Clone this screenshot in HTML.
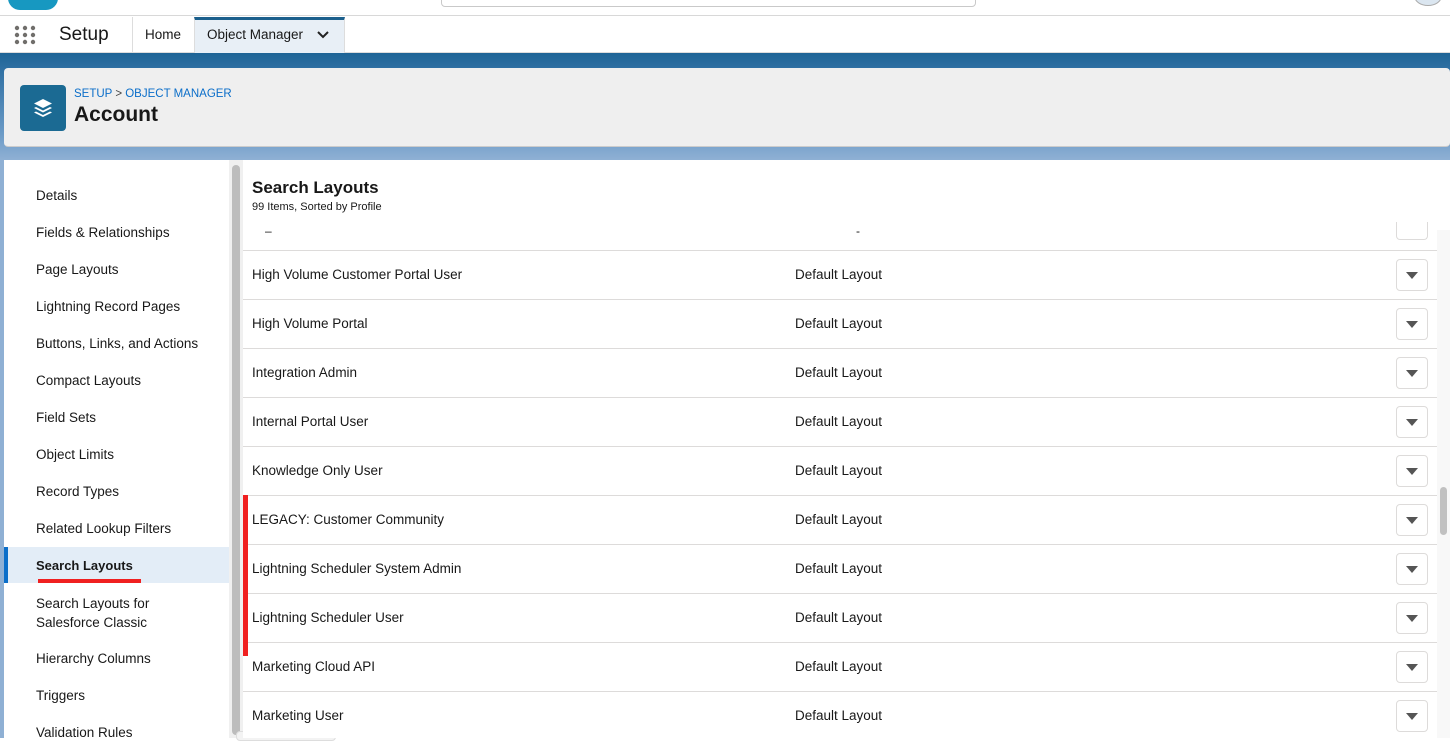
<!DOCTYPE html>
<html><head><style>
*{box-sizing:border-box;margin:0;padding:0}
body{width:1450px;height:738px;overflow:hidden;font-family:"Liberation Sans",sans-serif;background:#fff;position:relative;color:#181818}
.abs{position:absolute}
.row{position:absolute;left:243px;width:1194px;height:49px;border-top:1px solid #dddbda;font-size:13.5px}
.row .a{position:absolute;left:9px;top:16px}
.row .b{position:absolute;left:552px;top:16px}
.row .btn{position:absolute;left:1153px;top:8px;width:32px;height:32px;border:1px solid #dddbda;border-radius:4px;background:#fff}
.row .btn:after{content:"";position:absolute;left:9px;top:12px;border-left:6px solid transparent;border-right:6px solid transparent;border-top:7px solid #555}
.nav{position:absolute;left:36px;font-size:13.5px}
</style></head><body>
<div class="abs" style="left:0;top:0;width:1450px;height:16px;border-bottom:1px solid #d8d8d8;background:#fff"></div>
<div class="abs" style="left:8px;top:-14px;width:50px;height:24px;background:#1798c1;border-radius:14px"></div>
<div class="abs" style="left:441px;top:-10px;width:535px;height:17px;border:1px solid #c9c9c9;border-radius:4px"></div>
<div class="abs" style="left:1414px;top:-14px;width:28px;height:20px;border:1px solid #aaa;border-radius:50%;background:#dbe6f0"></div>
<div class="abs" style="left:0;top:17px;width:1450px;height:36px;background:#fff;border-bottom:1px solid #ddd"></div>
<svg class="abs" style="left:14px;top:25px" width="22" height="20"><g fill="#706e6b"><circle cx="3" cy="3" r="2.2"/><circle cx="11" cy="3" r="2.2"/><circle cx="19" cy="3" r="2.2"/><circle cx="3" cy="10" r="2.2"/><circle cx="11" cy="10" r="2.2"/><circle cx="19" cy="10" r="2.2"/><circle cx="3" cy="17" r="2.2"/><circle cx="11" cy="17" r="2.2"/><circle cx="19" cy="17" r="2.2"/></g></svg>
<div class="abs" style="left:59px;top:24px;font-size:19px">Setup</div>
<div class="abs" style="left:132px;top:17px;width:1px;height:36px;background:#ddd"></div>
<div class="abs" style="left:145px;top:27px;font-size:13.5px">Home</div>
<div class="abs" style="left:194px;top:17px;width:151px;height:36px;background:#e8eff6;border-top:3px solid #1b5f8c;border-left:1px solid #ddd;border-right:1px solid #ddd"></div>
<div class="abs" style="left:207px;top:27px;font-size:13.5px">Object Manager</div>
<svg class="abs" style="left:317px;top:31px" width="12" height="8"><path d="M1 1 L6 6 L11 1" stroke="#222" stroke-width="2" fill="none"/></svg>
<div class="abs" style="left:0;top:53px;width:1450px;height:107px;background:linear-gradient(#1d6496 0,#2e6fa2 15px,#6a9ac6 80px,#8fb0d4 107px)"></div>
<div class="abs" style="left:4px;top:68px;width:1446px;height:79px;background:#efefef;border-radius:4px;border-bottom:1px solid #ccc"></div>
<div class="abs" style="left:20px;top:85px;width:46px;height:46px;background:#1b6a93;border-radius:4px"></div>
<svg class="abs" style="left:31px;top:96px" width="24" height="24"><g fill="#fff"><path d="M12 3 L21 7.5 L12 12 L3 7.5Z"/><path d="M5 11 L12 14.5 L19 11 L21 12 L12 16.5 L3 12Z"/><path d="M5 15.5 L12 19 L19 15.5 L21 16.5 L12 21 L3 16.5Z"/></g></svg>
<div class="abs" style="left:74px;top:88px;font-size:11.5px;color:#0b6ec9">SETUP <span style="color:#444">&gt;</span> OBJECT MANAGER</div>
<div class="abs" style="left:74px;top:103px;font-size:21px;font-weight:bold">Account</div>
<div class="abs" style="left:0;top:160px;width:4px;height:578px;background:#8fb0d4"></div>
<div class="abs" style="left:4px;top:163px;width:226px;height:575px;background:#fff;border-radius:4px 0 0 0"></div>
<div class="nav" style="top:188px">Details</div>
<div class="nav" style="top:225px">Fields &amp; Relationships</div>
<div class="nav" style="top:262px">Page Layouts</div>
<div class="nav" style="top:299px">Lightning Record Pages</div>
<div class="nav" style="top:336px">Buttons, Links, and Actions</div>
<div class="nav" style="top:373px">Compact Layouts</div>
<div class="nav" style="top:410px">Field Sets</div>
<div class="nav" style="top:447px">Object Limits</div>
<div class="nav" style="top:484px">Record Types</div>
<div class="nav" style="top:521px">Related Lookup Filters</div>
<div class="abs" style="left:4px;top:547px;width:225px;height:36px;background:#e3edf7;border-left:4px solid #0b6ec9"></div>
<div class="nav" style="top:558px;font-weight:bold;font-size:13px">Search Layouts</div>
<div class="abs" style="left:38px;top:579px;width:103px;height:4px;background:#f02020"></div>
<div class="nav" style="top:594px;line-height:19px">Search Layouts for<br>Salesforce Classic</div>
<div class="nav" style="top:651px">Hierarchy Columns</div>
<div class="nav" style="top:688px">Triggers</div>
<div class="nav" style="top:725px">Validation Rules</div>
<div class="abs" style="left:229px;top:160px;width:14px;height:578px;background:#f0f0f0"></div>
<div class="abs" style="left:232px;top:165px;width:8px;height:570px;background:#bdbdbd;border-radius:4px"></div>
<div class="abs" style="left:236px;top:731px;width:100px;height:10px;background:#f3f3f3;border:1px solid #ddd;border-radius:4px"></div>
<div class="abs" style="left:243px;top:163px;width:1207px;height:575px;background:#fff"></div>
<div class="abs" style="left:252px;top:178px;font-size:17px;font-weight:bold">Search Layouts</div>
<div class="abs" style="left:252px;top:201px;font-size:11px">99 Items, Sorted by Profile</div>
<div class="abs" style="left:265px;top:224px;font-size:12px">–</div>
<div class="abs" style="left:856px;top:224px;font-size:12px">-</div>
<div class="abs" style="left:1396px;top:222px;width:32px;height:18px;border:1px solid #dddbda;border-top:none;border-radius:0 0 4px 4px"></div>
<div class="abs" style="left:1437px;top:230px;width:13px;height:508px;background:#f8f8f8"></div>
<div class="abs" style="left:1440px;top:487px;width:7px;height:48px;background:#c1c1c1;border-radius:4px"></div>
<div class="row" style="top:250px"><span class="a">High Volume Customer Portal User</span><span class="b">Default Layout</span><i class="btn"></i></div>
<div class="row" style="top:299px"><span class="a">High Volume Portal</span><span class="b">Default Layout</span><i class="btn"></i></div>
<div class="row" style="top:348px"><span class="a">Integration Admin</span><span class="b">Default Layout</span><i class="btn"></i></div>
<div class="row" style="top:397px"><span class="a">Internal Portal User</span><span class="b">Default Layout</span><i class="btn"></i></div>
<div class="row" style="top:446px"><span class="a">Knowledge Only User</span><span class="b">Default Layout</span><i class="btn"></i></div>
<div class="row" style="top:495px"><span class="a">LEGACY: Customer Community</span><span class="b">Default Layout</span><i class="btn"></i></div>
<div class="row" style="top:544px"><span class="a">Lightning Scheduler System Admin</span><span class="b">Default Layout</span><i class="btn"></i></div>
<div class="row" style="top:593px"><span class="a">Lightning Scheduler User</span><span class="b">Default Layout</span><i class="btn"></i></div>
<div class="row" style="top:642px"><span class="a">Marketing Cloud API</span><span class="b">Default Layout</span><i class="btn"></i></div>
<div class="row" style="top:691px"><span class="a">Marketing User</span><span class="b">Default Layout</span><i class="btn"></i></div>
<div class="abs" style="left:243px;top:495px;width:5px;height:161px;background:#f02020"></div>
</body></html>
